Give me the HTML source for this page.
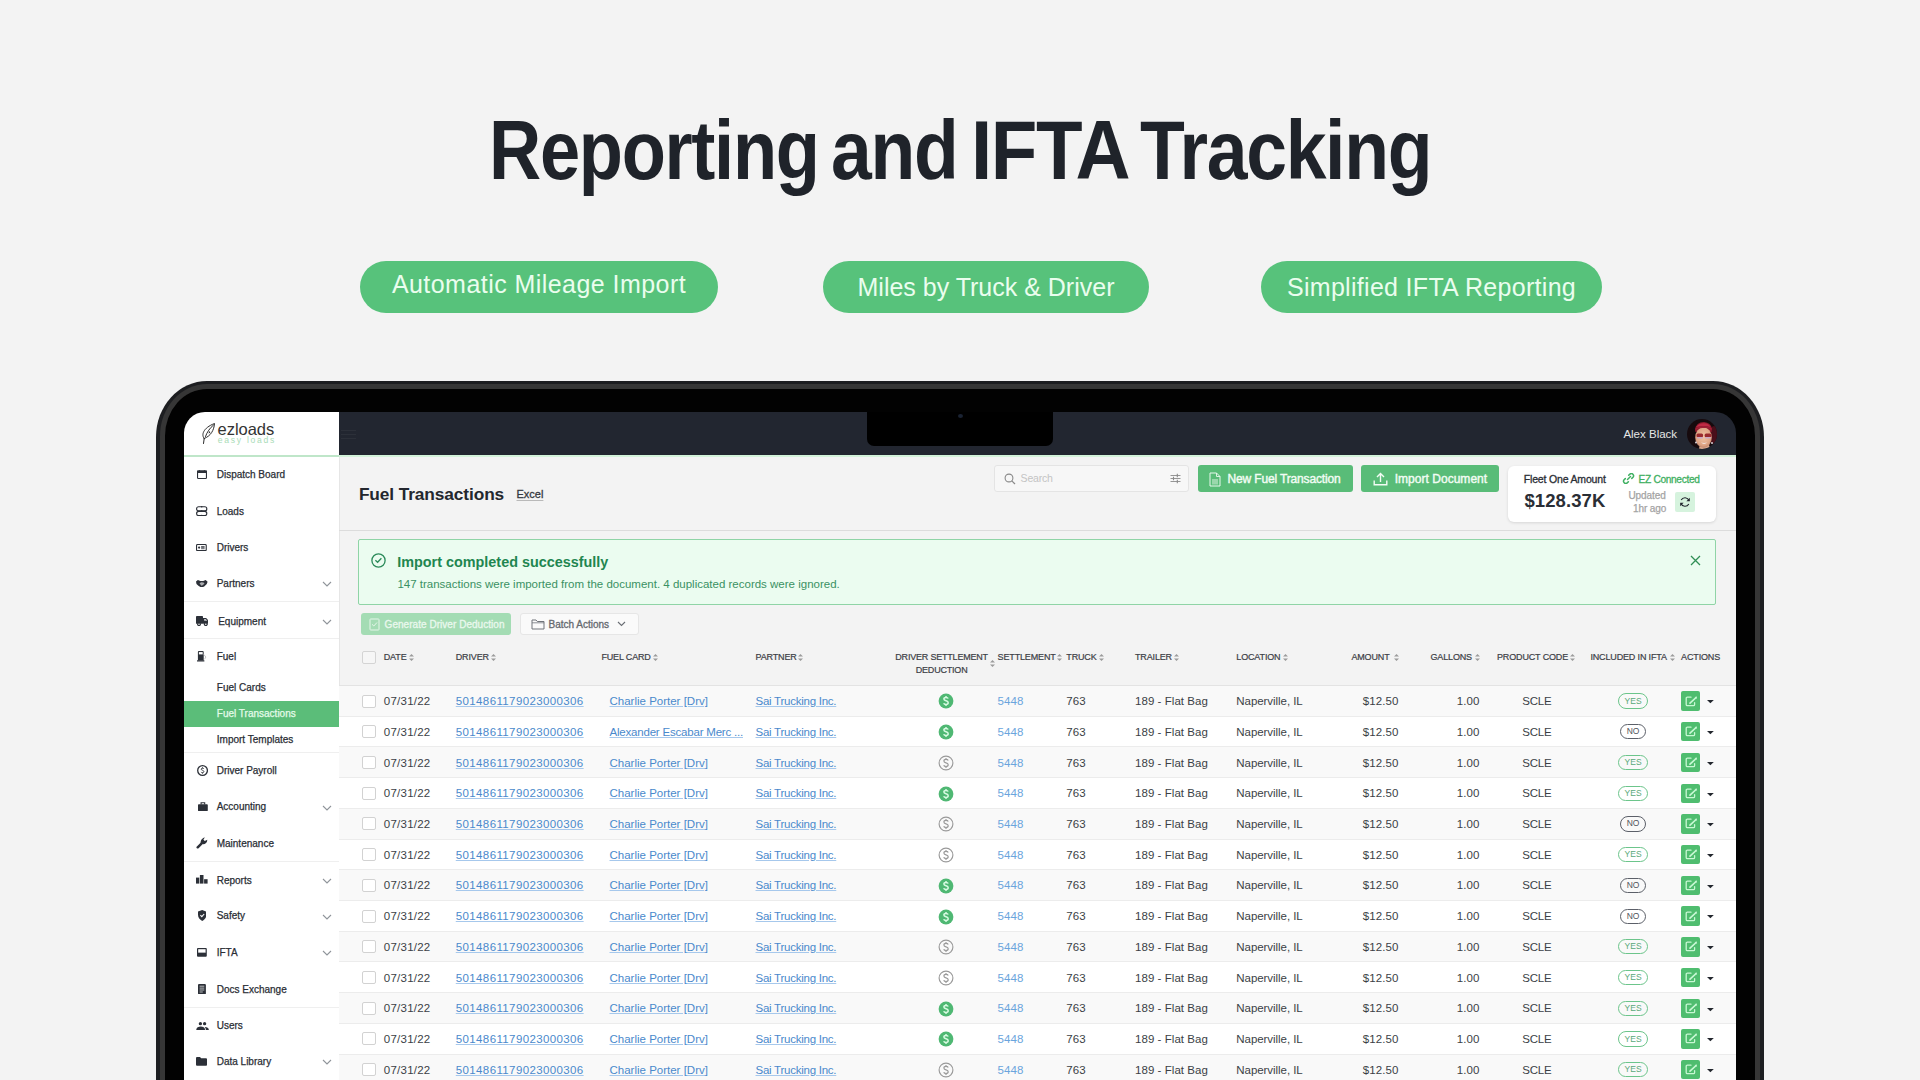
<!DOCTYPE html>
<html><head><meta charset="utf-8">
<style>
*{margin:0;padding:0;box-sizing:border-box}
html,body{width:1920px;height:1080px;overflow:hidden;background:#f3f3f3;font-family:"Liberation Sans",sans-serif}
#title div{position:absolute;top:96px;font-weight:bold;font-size:83px;color:#1f232a;letter-spacing:-1.5px;line-height:110px;white-space:nowrap;transform-origin:0 0}
.pill{position:absolute;top:261px;height:52px;border-radius:26px;background:#57c27b;color:#eafdee;font-size:25px;line-height:52px;text-align:center;white-space:nowrap}
#f1{position:absolute;left:156px;top:380.5px;width:1608px;height:900px;border-radius:51px/56px;background:#1d1e21}
#f2{position:absolute;left:159.7px;top:383.8px;width:1600.6px;height:900px;border-radius:47px/52px;background:#363636}
#f3{position:absolute;left:165px;top:389px;width:1590px;height:900px;border-radius:42px/47px;background:#020202}
#scr{position:absolute;left:184px;top:412px;width:1552px;height:800px;border-radius:21px 21px 0 0;overflow:hidden}
.t{position:absolute;white-space:nowrap}
.b{position:absolute}
.u{text-decoration:underline;text-underline-offset:1.5px;text-decoration-thickness:1px}
</style></head>
<body>
<div id="title"><div style="left:488.5px;transform:scaleX(.871)">Reporting</div><div style="left:831.15px;transform:scaleX(.883)">and</div><div style="left:971.2px;transform:scaleX(.919)">IFTA</div><div style="left:1140.2px;transform:scaleX(.884)">Tracking</div></div>
<div class="pill" style="left:360px;width:358px;line-height:47px;letter-spacing:.45px">Automatic Mileage Import</div>
<div class="pill" style="left:823px;width:326px">Miles by Truck &amp; Driver</div>
<div class="pill" style="left:1261px;width:341px;letter-spacing:.3px">Simplified IFTA Reporting</div>
<div id="f1"></div><div id="f2"></div><div id="f3"></div>
<div id="scr">

<div class="b" style="left:154.00px;top:43.00px;width:1398.00px;height:625.00px;background:#f3f3f3"></div>
<div class="b" style="left:0.00px;top:0.00px;width:154.50px;height:668.00px;background:#ffffff"></div>
<div class="b" style="left:154.50px;top:45.00px;width:1.00px;height:623.00px;background:#e6e6e6"></div>
<div class="b" style="left:155.00px;top:0.00px;width:1397.00px;height:43.00px;background:#222630"></div>
<div class="b" style="left:0.00px;top:43.20px;width:155.00px;height:1.60px;background:#bfe6c9"></div>
<div class="b" style="left:155.00px;top:43.20px;width:1397.00px;height:1.60px;background:#d3f2da"></div>
<div class="b" style="left:683.00px;top:0.00px;width:186.00px;height:34.00px;background:#000;border-radius:0 0 7px 7px"></div>
<div class="b" style="left:773.50px;top:1.50px;width:5.00px;height:4.00px;background:#1a2333;border-radius:50%"></div>
<div class="b" style="left:157.00px;top:17.50px;width:15.00px;height:1.00px;background:#2c3039"></div>
<div class="b" style="left:157.00px;top:21.50px;width:15.00px;height:1.00px;background:#2c3039"></div>
<div class="b" style="left:157.00px;top:25.50px;width:15.00px;height:1.00px;background:#2c3039"></div>
<div class="t" style="left:1439.40px;top:15.42px;font-size:11.5px;line-height:15px;color:#e6e6e6;">Alex Black</div>
<svg class="b" style="left:1503.20px;top:7.20px;" width="30" height="30" viewBox="0 0 30 30"><defs><clipPath id="av"><circle cx="15" cy="15" r="15"/></clipPath><radialGradient id="fg" cx="0.5" cy="0.45" r="0.6"><stop offset="0" stop-color="#f2c4a4"/><stop offset="0.7" stop-color="#dfa686"/><stop offset="1" stop-color="#b97a62"/></radialGradient></defs>
<g clip-path="url(#av)"><rect width="30" height="30" fill="#160a0d"/>
<ellipse cx="27" cy="16" rx="5" ry="9" fill="#4a0f1a"/>
<path d="M8 11 Q9 3 17 3 Q24 3.5 25 10 L24.5 13 L8.5 13Z" fill="#8d1a2c"/>
<path d="M9 8 Q12 4 17 4.2 Q22 4.5 23.5 8 Q18 6 9 8Z" fill="#c02a44"/>
<path d="M13 26 L22 26 L23.5 31 L11.5 31Z" fill="#d9ab90"/>
<ellipse cx="16.5" cy="18.5" rx="8.3" ry="10.3" fill="url(#fg)"/>
<path d="M8.5 11 Q12 8.5 17 9 Q22 8.6 24.5 11 L24.5 9 Q17 5.5 8.5 9Z" fill="#a01f36"/>
<rect x="9.5" y="14.6" width="6.6" height="3.6" rx="1.5" fill="#9a2a2e"/><rect x="17.6" y="14.6" width="6.8" height="3.6" rx="1.5" fill="#9a2a2e"/>
<rect x="10" y="18" width="6" height="1.6" rx="0.8" fill="#c9a9c4"/><rect x="18" y="18" width="6" height="1.6" rx="0.8" fill="#c9a9c4"/>
<path d="M14 23.6 Q17 26.2 20.2 23.6 Q17 24.4 14 23.6Z" fill="#f4e6e2"/>
<circle cx="9" cy="23.5" r="1" fill="#d8d0d4"/><circle cx="25" cy="24" r="1" fill="#d8d0d4"/>
</g></svg>
<svg class="b" style="left:16.00px;top:10.00px;" width="17" height="23" viewBox="0 0 17 23"><g fill="none" stroke="#2b2b2b" stroke-width="1" stroke-linecap="round">
<path d="M3.5 21.5 L4.2 16.5"/>
<path d="M4.2 16.5 C1 13 3 6 14.5 1.5 C14 8 11 14 4.2 16.5Z"/>
<path d="M5.5 14.5 C7 10 10 6 13.5 3"/>
</g><path d="M9.6 9 L8.3 11.4 L10.4 10.4Z" fill="#2b2b2b"/></svg>
<div class="t" style="left:33.60px;top:7.28px;font-size:16.5px;line-height:21px;color:#333333;letter-spacing:-0.05px;">ezloads</div>
<div class="t" style="left:33.80px;top:23.42px;font-size:8.6px;line-height:11px;color:#a9dcb7;letter-spacing:1.72px;">easy loads</div>
<div class="t" style="left:32.70px;top:56.34px;font-size:10px;line-height:13px;color:#2a2e35;-webkit-text-stroke:0.25px #2a2e35">Dispatch Board</div>
<svg class="b" style="left:12.90px;top:57.80px;" width="10" height="9" viewBox="0 0 10 9"><rect x="0.55" y="1" width="8.9" height="7.45" rx="0.8" fill="none" stroke="#2c3038" stroke-width="1.1"/><rect x="0" y="0.6" width="10" height="2.3" rx="0.5" fill="#2c3038"/><path d="M2.6 0 V1 M7.4 0 V1" stroke="#2c3038" stroke-width="0.8"/></svg>
<div class="t" style="left:32.70px;top:92.74px;font-size:10px;line-height:13px;color:#2a2e35;-webkit-text-stroke:0.25px #2a2e35">Loads</div>
<svg class="b" style="left:12.40px;top:93.90px;" width="11.4" height="10.4" viewBox="0 0 11.4 10.4"><rect x="0.6" y="0.8" width="10.2" height="4.1" rx="2" fill="none" stroke="#2c3038" stroke-width="1.15"/><rect x="0.6" y="5.4" width="10.2" height="4.2" rx="2.1" fill="none" stroke="#2c3038" stroke-width="1.15"/><circle cx="5.7" cy="0.8" r="0.8" fill="#2c3038"/><circle cx="5.7" cy="5.1" r="0.9" fill="#2c3038"/><circle cx="5.7" cy="9.6" r="0.8" fill="#2c3038"/></svg>
<div class="t" style="left:32.70px;top:128.83px;font-size:10px;line-height:13px;color:#2a2e35;-webkit-text-stroke:0.25px #2a2e35">Drivers</div>
<svg class="b" style="left:12.40px;top:131.90px;" width="10.8" height="7.2" viewBox="0 0 10.8 7.2"><rect x="0.55" y="0.55" width="9.7" height="6.1" rx="0.9" fill="none" stroke="#2c3038" stroke-width="1.1"/><circle cx="3.1" cy="3.6" r="1.1" fill="#2c3038"/><path d="M5.1 2.5 H8.6 M5.1 3.6 H8.6 M5.1 4.7 H8.6" stroke="#2c3038" stroke-width="0.75"/></svg>
<div class="t" style="left:32.70px;top:165.03px;font-size:10px;line-height:13px;color:#2a2e35;-webkit-text-stroke:0.25px #2a2e35">Partners</div>
<svg class="b" style="left:12.20px;top:167.70px;" width="11.6" height="7.3" viewBox="0 0 11.6 7.3"><path d="M0 1.6 L1.9 0 L4.4 1 L7.2 1 L9.7 0 L11.6 1.8 L10.8 4 L8.2 6.5 L6.3 7.3 L4.7 7.2 L2.4 5.7 L0.5 3.9Z" fill="#2c3038"/><path d="M3.5 3.3 L5.3 2.3 L7.5 2.4 L8.5 3.4 L6.7 5.3 L5.4 5.8Z" fill="#fff" opacity="0.6"/></svg>
<svg class="b" style="left:137.50px;top:169.20px;" width="10" height="6" viewBox="0 0 10 6"><path d="M1 1 L5 5 L9 1" fill="none" stroke="#8f949a" stroke-width="1.1"/></svg>
<div class="t" style="left:34.20px;top:202.53px;font-size:10px;line-height:13px;color:#2a2e35;-webkit-text-stroke:0.25px #2a2e35">Equipment</div>
<svg class="b" style="left:11.60px;top:204.10px;" width="12.8" height="10.2" viewBox="0 0 12.8 10.2"><rect x="0" y="0" width="7" height="7.8" rx="0.4" fill="#2c3038"/><path d="M7 1.9 H10.1 L12.8 4.9 V7.8 H7Z" fill="#2c3038"/><path d="M8.1 2.9 H9.7 L11.4 4.7 H8.1Z" fill="#fff" opacity="0.75"/><circle cx="3" cy="8.3" r="1.9" fill="#2c3038"/><circle cx="3" cy="8.3" r="0.75" fill="#fff"/><circle cx="9.8" cy="8.3" r="1.9" fill="#2c3038"/><circle cx="9.8" cy="8.3" r="0.75" fill="#fff"/></svg>
<svg class="b" style="left:137.50px;top:206.70px;" width="10" height="6" viewBox="0 0 10 6"><path d="M1 1 L5 5 L9 1" fill="none" stroke="#8f949a" stroke-width="1.1"/></svg>
<div class="t" style="left:32.70px;top:238.03px;font-size:10px;line-height:13px;color:#2a2e35;-webkit-text-stroke:0.25px #2a2e35">Fuel</div>
<svg class="b" style="left:13.20px;top:239.00px;" width="9.6" height="10.6" viewBox="0 0 9.6 10.6"><path d="M0.9 1 Q0.9 0 1.9 0 H5.7 Q6.7 0 6.7 1 V9.6 H0.9Z" fill="#2c3038"/><rect x="1.9" y="1.1" width="3.8" height="2.3" fill="#fff"/><rect x="0" y="9.2" width="7.4" height="1.4" rx="0.3" fill="#2c3038"/><path d="M6.7 3.4 L8.9 6 L7.6 8.2" fill="none" stroke="#b5b5b5" stroke-width="0.8"/></svg>
<div class="t" style="left:32.70px;top:352.24px;font-size:10px;line-height:13px;color:#2a2e35;-webkit-text-stroke:0.25px #2a2e35">Driver Payroll</div>
<svg class="b" style="left:12.50px;top:353.00px;" width="11.1" height="11" viewBox="0 0 11.1 11"><circle cx="5.55" cy="5.5" r="4.85" fill="none" stroke="#2c3038" stroke-width="1.3"/><path d="M6.9 4 C6.7 3.5 6.2 3.2 5.5 3.2 C4.7 3.2 4.2 3.6 4.2 4.2 C4.2 5.5 6.9 5.1 6.9 6.6 C6.9 7.3 6.3 7.7 5.5 7.7 C4.8 7.7 4.3 7.4 4.1 6.9 M5.5 2.3 V3.2 M5.5 7.7 V8.6" fill="none" stroke="#2c3038" stroke-width="0.9"/></svg>
<div class="t" style="left:32.70px;top:388.43px;font-size:10px;line-height:13px;color:#2a2e35;-webkit-text-stroke:0.25px #2a2e35">Accounting</div>
<svg class="b" style="left:14.10px;top:390.40px;" width="9.8" height="9.1" viewBox="0 0 9.8 9.1"><rect x="0" y="2.3" width="9.8" height="6.8" rx="0.8" fill="#2c3038"/><path d="M3.1 2.6 V0.8 H6.7 V2.6" fill="none" stroke="#2c3038" stroke-width="1.1"/></svg>
<svg class="b" style="left:137.50px;top:392.60px;" width="10" height="6" viewBox="0 0 10 6"><path d="M1 1 L5 5 L9 1" fill="none" stroke="#8f949a" stroke-width="1.1"/></svg>
<div class="t" style="left:32.70px;top:424.83px;font-size:10px;line-height:13px;color:#2a2e35;-webkit-text-stroke:0.25px #2a2e35">Maintenance</div>
<svg class="b" style="left:12.30px;top:425.20px;" width="11.8" height="12" viewBox="0 0 11.8 12"><path d="M1.7 10.3 L6.2 5.8" stroke="#2c3038" stroke-width="2.5" stroke-linecap="round"/><path d="M5 6.9 C4 4.6 5.3 1 8.9 0.5 L7.4 2.5 L8.7 4 L11.3 2.8 C11.4 6.1 8.5 7.7 6.3 7.1Z" fill="#2c3038"/></svg>
<div class="t" style="left:32.70px;top:461.63px;font-size:10px;line-height:13px;color:#2a2e35;-webkit-text-stroke:0.25px #2a2e35">Reports</div>
<svg class="b" style="left:12.10px;top:463.30px;" width="11.6" height="8.6" viewBox="0 0 11.6 8.6"><rect x="0" y="2.6" width="3.3" height="6" fill="#2c3038"/><rect x="3.9" y="0" width="3.6" height="8.6" fill="#2c3038"/><rect x="8.1" y="4.2" width="3.5" height="4.4" fill="#2c3038"/></svg>
<svg class="b" style="left:137.50px;top:465.80px;" width="10" height="6" viewBox="0 0 10 6"><path d="M1 1 L5 5 L9 1" fill="none" stroke="#8f949a" stroke-width="1.1"/></svg>
<div class="t" style="left:32.70px;top:497.43px;font-size:10px;line-height:13px;color:#2a2e35;-webkit-text-stroke:0.25px #2a2e35">Safety</div>
<svg class="b" style="left:13.60px;top:498.20px;" width="8.4" height="11" viewBox="0 0 8.4 11"><path d="M4.2 0 L8.4 1.6 V4.8 C8.4 7.6 6.6 9.8 4.2 11 C1.8 9.8 0 7.6 0 4.8 V1.6Z" fill="#2c3038"/><path d="M2.4 5.2 L3.8 6.6 L6.2 4" fill="none" stroke="#fff" stroke-width="1.1"/></svg>
<svg class="b" style="left:137.50px;top:501.60px;" width="10" height="6" viewBox="0 0 10 6"><path d="M1 1 L5 5 L9 1" fill="none" stroke="#8f949a" stroke-width="1.1"/></svg>
<div class="t" style="left:32.70px;top:534.13px;font-size:10px;line-height:13px;color:#2a2e35;-webkit-text-stroke:0.25px #2a2e35">IFTA</div>
<svg class="b" style="left:13.10px;top:536.00px;" width="9.8" height="8.7" viewBox="0 0 9.8 8.7"><rect x="0" y="0" width="9.8" height="8.7" rx="0.9" fill="#2c3038"/><rect x="1.2" y="1.2" width="7.4" height="3.3" fill="#fff"/><rect x="1.2" y="4.3" width="7.4" height="0.7" fill="#fff" opacity="0.4"/></svg>
<svg class="b" style="left:137.50px;top:538.30px;" width="10" height="6" viewBox="0 0 10 6"><path d="M1 1 L5 5 L9 1" fill="none" stroke="#8f949a" stroke-width="1.1"/></svg>
<div class="t" style="left:32.70px;top:570.63px;font-size:10px;line-height:13px;color:#2a2e35;-webkit-text-stroke:0.25px #2a2e35">Docs Exchange</div>
<svg class="b" style="left:14.00px;top:571.50px;" width="7.9" height="10.4" viewBox="0 0 7.9 10.4"><rect x="0" y="0" width="7.9" height="10.4" rx="1.1" fill="#2c3038"/><path d="M1.6 2.2 H6.3 M1.6 4.1 H6.3 M1.6 6 H6.3 M1.6 8 H4.8" stroke="#fff" stroke-width="0.85" opacity="0.8"/></svg>
<div class="t" style="left:32.70px;top:607.03px;font-size:10px;line-height:13px;color:#2a2e35;-webkit-text-stroke:0.25px #2a2e35">Users</div>
<svg class="b" style="left:11.80px;top:609.60px;" width="12.9" height="8" viewBox="0 0 12.9 8"><circle cx="4.4" cy="1.7" r="1.65" fill="#2c3038"/><circle cx="8.6" cy="1.7" r="1.65" fill="#2c3038"/><path d="M0.2 8 C0.4 5.3 2.5 4.5 4.8 4.5 C7 4.5 8.9 5.3 9.2 8Z" fill="#2c3038"/><path d="M9.9 8 C9.8 6.7 9.4 5.8 8.8 5.1 C11 5 12.6 5.9 12.9 8Z" fill="#2c3038"/></svg>
<div class="t" style="left:32.70px;top:643.24px;font-size:10px;line-height:13px;color:#2a2e35;-webkit-text-stroke:0.25px #2a2e35">Data Library</div>
<svg class="b" style="left:12.40px;top:644.90px;" width="11.1" height="8.7" viewBox="0 0 11.1 8.7"><path d="M0 1 Q0 0 1 0 H4 L5.2 1.2 H10.1 Q11.1 1.2 11.1 2.2 V7.7 Q11.1 8.7 10.1 8.7 H1 Q0 8.7 0 7.7Z" fill="#2c3038"/></svg>
<svg class="b" style="left:137.50px;top:647.40px;" width="10" height="6" viewBox="0 0 10 6"><path d="M1 1 L5 5 L9 1" fill="none" stroke="#8f949a" stroke-width="1.1"/></svg>
<div class="t" style="left:32.80px;top:269.24px;font-size:10px;line-height:13px;color:#2a2e35;-webkit-text-stroke:0.25px #2a2e35">Fuel Cards</div>
<div class="b" style="left:0.00px;top:288.80px;width:154.50px;height:25.90px;background:#5bbd79"></div>
<div class="t" style="left:32.80px;top:295.24px;font-size:10px;line-height:13px;color:#e4fbe9;-webkit-text-stroke:0.25px #e4fbe9">Fuel Transactions</div>
<div class="t" style="left:32.80px;top:321.03px;font-size:10px;line-height:13px;color:#2a2e35;-webkit-text-stroke:0.25px #2a2e35">Import Templates</div>
<div class="b" style="left:0.00px;top:188.80px;width:154.50px;height:1.00px;background:#efefef"></div>
<div class="b" style="left:0.00px;top:226.30px;width:154.50px;height:1.00px;background:#efefef"></div>
<div class="b" style="left:0.00px;top:340.20px;width:154.50px;height:1.00px;background:#efefef"></div>
<div class="b" style="left:0.00px;top:449.30px;width:154.50px;height:1.00px;background:#efefef"></div>
<div class="b" style="left:0.00px;top:594.50px;width:154.50px;height:1.00px;background:#efefef"></div>
<div class="t" style="left:174.90px;top:70.61px;font-size:17.3px;line-height:22px;color:#23272e;font-weight:700;letter-spacing:-0.1px;">Fuel Transactions</div>
<div class="t" style="left:332.50px;top:74.69px;font-size:11px;line-height:14px;color:#35393f;letter-spacing:0px;-webkit-text-stroke:0.3px #35393f;text-decoration:underline;text-decoration-color:#b9b9b9;text-underline-offset:1.5px">Excel</div>
<div class="b" style="left:810.20px;top:53.00px;width:195.20px;height:26.70px;background:#f7f7f7;border:1px solid #e4e4e4;border-radius:3px"></div>
<svg class="b" style="left:819.50px;top:60.50px;" width="12" height="12" viewBox="0 0 12 12"><circle cx="5" cy="5" r="3.9" fill="none" stroke="#8a8a8a" stroke-width="1.1"/><path d="M7.8 7.8 L11 11" stroke="#8a8a8a" stroke-width="1.2"/></svg>
<div class="t" style="left:836.60px;top:59.26px;font-size:10.5px;line-height:14px;color:#c4c4c4;letter-spacing:-0.2px;">Search</div>
<svg class="b" style="left:985.50px;top:61.00px;" width="11" height="11" viewBox="0 0 11 11"><path d="M0.5 2.5 H10.5 M0.5 5.5 H10.5 M0.5 8.5 H10.5" stroke="#8a8a8a" stroke-width="0.9"/><path d="M7.3 0.8 V4.2 M3.5 3.8 V7.2 M7.3 6.8 V10.2" stroke="#8a8a8a" stroke-width="1.1"/></svg>
<div class="b" style="left:1014.00px;top:53.00px;width:154.50px;height:26.70px;background:#59bc78;border-radius:3px"></div>
<svg class="b" style="left:1024.50px;top:59.50px;" width="12" height="15" viewBox="0 0 12 15"><path d="M1 1 H7.5 L11 4.5 V14 H1Z" fill="none" stroke="#e9f8ed" stroke-width="1"/><path d="M7.5 1 V4.5 H11" fill="none" stroke="#e9f8ed" stroke-width="0.9"/><rect x="3" y="7" width="6" height="5.5" fill="#9ad7ac"/></svg>
<div class="t" style="left:1043.50px;top:58.64px;font-size:12px;line-height:16px;color:#f2fcf4;letter-spacing:-0.15px;-webkit-text-stroke:0.4px #f2fcf4">New Fuel Transaction</div>
<div class="b" style="left:1176.80px;top:53.00px;width:138.00px;height:26.70px;background:#59bc78;border-radius:3px"></div>
<svg class="b" style="left:1188.50px;top:59.50px;" width="15" height="15" viewBox="0 0 15 15"><path d="M1.2 8.5 V12.8 H13.8 V8.5" fill="none" stroke="#f2fcf4" stroke-width="1.4"/><path d="M7.5 10 V1.8 M4 5 L7.5 1.6 L11 5" fill="none" stroke="#f2fcf4" stroke-width="1.4"/></svg>
<div class="t" style="left:1210.70px;top:58.64px;font-size:12px;line-height:16px;color:#f2fcf4;letter-spacing:0.03px;-webkit-text-stroke:0.4px #f2fcf4">Import Document</div>
<div class="b" style="left:1323.50px;top:53.60px;width:208.40px;height:56.40px;background:#fff;border-radius:6px;box-shadow:0 1px 3px rgba(0,0,0,.12)"></div>
<div class="t" style="left:1339.80px;top:60.16px;font-size:10.5px;line-height:14px;color:#2a2e35;letter-spacing:-0.17px;-webkit-text-stroke:0.3px #2a2e35">Fleet One Amount</div>
<div class="t" style="left:1340.40px;top:76.99px;font-size:18.5px;line-height:24px;color:#2a2e35;font-weight:700;letter-spacing:0.1px;">$128.37K</div>
<svg class="b" style="left:1437.50px;top:61.00px;" width="13" height="11" viewBox="0 0 13 11"><g fill="none" stroke="#3fb062" stroke-width="1.5" stroke-linecap="round"><path d="M5.5 6.5 L8.5 3.5"/><path d="M6.7 2.3 L7.9 1.1 A2.2 2.2 0 0 1 11 4.2 L9.8 5.4"/><path d="M3.3 5.6 L2.1 6.8 A2.2 2.2 0 0 0 5.2 9.9 L6.4 8.7"/></g></svg>
<div class="t" style="left:1454.60px;top:60.77px;font-size:10.2px;line-height:13px;color:#3fb062;letter-spacing:-0.35px;-webkit-text-stroke:0.3px #3fb062">EZ Connected</div>
<div class="t" style="left:1444.50px;top:76.74px;font-size:10px;line-height:13px;color:#a3a3a3;letter-spacing:-0.1px;-webkit-text-stroke:0.25px #a3a3a3">Updated</div>
<div class="t" style="left:1449.00px;top:90.04px;font-size:10px;line-height:13px;color:#a3a3a3;letter-spacing:-0.1px;-webkit-text-stroke:0.25px #a3a3a3">1hr ago</div>
<div class="b" style="left:1491.20px;top:80.00px;width:19.90px;height:20.00px;background:#d6f3de;border-radius:2px"></div>
<svg class="b" style="left:1495.00px;top:84.00px;" width="12" height="12" viewBox="0 0 12 12"><g fill="none" stroke="#22262e" stroke-width="1.1"><path d="M10 4.5 A4.3 4.3 0 0 0 2.2 4"/><path d="M2 7.5 A4.3 4.3 0 0 0 9.8 8"/></g><path d="M10.8 1.8 V5.2 H7.4Z" fill="#22262e"/><path d="M1.2 10.2 V6.8 H4.6Z" fill="#22262e"/></svg>
<div class="b" style="left:155.00px;top:118.00px;width:1397.00px;height:1.00px;background:#dcdcdc"></div>
<div class="b" style="left:174.40px;top:127.30px;width:1357.80px;height:65.60px;background:#ebfcf0;border:1px solid #8fd4a6;border-radius:2px"></div>
<svg class="b" style="left:187.30px;top:140.50px;" width="15" height="15" viewBox="0 0 15 15"><circle cx="7.5" cy="7.5" r="6.6" fill="none" stroke="#2a8a59" stroke-width="1.3"/><path d="M4.4 7.3 L6.6 9.3 L10.4 5.3" fill="none" stroke="#2a8a59" stroke-width="1.3"/></svg>
<div class="t" style="left:213.20px;top:140.61px;font-size:14.4px;line-height:19px;color:#1f8650;font-weight:700;">Import completed successfully</div>
<div class="t" style="left:213.40px;top:164.92px;font-size:11.5px;line-height:15px;color:#3a9163;">147 transactions were imported from the document. 4 duplicated records were ignored.</div>
<svg class="b" style="left:1505.50px;top:142.50px;" width="11" height="11" viewBox="0 0 11 11"><path d="M1 1 L10 10 M10 1 L1 10" stroke="#2f8f55" stroke-width="1.3"/></svg>
<div class="b" style="left:177.00px;top:201.00px;width:150.40px;height:21.60px;background:#a4dcb4;border-radius:3px"></div>
<svg class="b" style="left:184.50px;top:205.50px;" width="11" height="13" viewBox="0 0 11 13"><rect x="1" y="1" width="9" height="11" rx="0.6" fill="none" stroke="#e6f6ea" stroke-width="1"/><path d="M3 6.3 L4.8 8 L8 4.5" fill="none" stroke="#e6f6ea" stroke-width="1"/></svg>
<div class="t" style="left:200.60px;top:205.83px;font-size:10px;line-height:13px;color:#eaf8ee;letter-spacing:0.04px;-webkit-text-stroke:0.3px #eaf8ee">Generate Driver Deduction</div>
<div class="b" style="left:336.20px;top:201.00px;width:118.60px;height:21.80px;background:#fafafa;border:1px solid #e6e6e6;border-radius:3px"></div>
<svg class="b" style="left:346.50px;top:205.50px;" width="14" height="12" viewBox="0 0 14 12"><path d="M1 2 H5 L6.3 3.5 H13 V11 H1Z" fill="none" stroke="#70747a" stroke-width="1"/><path d="M1 4.8 H13" stroke="#70747a" stroke-width="0.8"/></svg>
<div class="t" style="left:364.50px;top:205.83px;font-size:10px;line-height:13px;color:#65696f;-webkit-text-stroke:0.3px #65696f">Batch Actions</div>
<svg class="b" style="left:432.50px;top:208.50px;" width="9" height="6" viewBox="0 0 9 6"><path d="M1 1 L4.5 4.5 L8 1" fill="none" stroke="#6a6e74" stroke-width="1.1"/></svg>
<div class="b" style="left:178.20px;top:238.80px;width:13.60px;height:13.20px;background:#f6f6f6;border:1px solid #d4d4d4;border-radius:2px"></div>
<div class="t" style="left:199.75px;top:239.48px;font-size:9px;line-height:12px;color:#3c4046;letter-spacing:-0.15px;-webkit-text-stroke:0.2px #3c4046">DATE</div>
<svg class="b" style="left:225.40px;top:242.10px;" width="5" height="8" viewBox="0 0 5 8"><path d="M0 2.4 L2.5 0 L5 2.4Z M0 4.6 L5 4.6 L2.5 7Z" fill="#9b9b9b"/></svg>
<div class="t" style="left:271.75px;top:239.48px;font-size:9px;line-height:12px;color:#3c4046;letter-spacing:-0.15px;-webkit-text-stroke:0.2px #3c4046">DRIVER</div>
<svg class="b" style="left:306.50px;top:242.10px;" width="5" height="8" viewBox="0 0 5 8"><path d="M0 2.4 L2.5 0 L5 2.4Z M0 4.6 L5 4.6 L2.5 7Z" fill="#9b9b9b"/></svg>
<div class="t" style="left:417.40px;top:239.48px;font-size:9px;line-height:12px;color:#3c4046;letter-spacing:-0.15px;-webkit-text-stroke:0.2px #3c4046">FUEL CARD</div>
<svg class="b" style="left:468.50px;top:242.10px;" width="5" height="8" viewBox="0 0 5 8"><path d="M0 2.4 L2.5 0 L5 2.4Z M0 4.6 L5 4.6 L2.5 7Z" fill="#9b9b9b"/></svg>
<div class="t" style="left:571.50px;top:239.48px;font-size:9px;line-height:12px;color:#3c4046;letter-spacing:-0.15px;-webkit-text-stroke:0.2px #3c4046">PARTNER</div>
<svg class="b" style="left:613.50px;top:242.10px;" width="5" height="8" viewBox="0 0 5 8"><path d="M0 2.4 L2.5 0 L5 2.4Z M0 4.6 L5 4.6 L2.5 7Z" fill="#9b9b9b"/></svg>
<div class="t" style="left:813.60px;top:239.48px;font-size:9px;line-height:12px;color:#3c4046;letter-spacing:-0.15px;-webkit-text-stroke:0.2px #3c4046">SETTLEMENT</div>
<svg class="b" style="left:872.50px;top:242.10px;" width="5" height="8" viewBox="0 0 5 8"><path d="M0 2.4 L2.5 0 L5 2.4Z M0 4.6 L5 4.6 L2.5 7Z" fill="#9b9b9b"/></svg>
<div class="t" style="left:882.30px;top:239.48px;font-size:9px;line-height:12px;color:#3c4046;letter-spacing:-0.15px;-webkit-text-stroke:0.2px #3c4046">TRUCK</div>
<svg class="b" style="left:914.50px;top:242.10px;" width="5" height="8" viewBox="0 0 5 8"><path d="M0 2.4 L2.5 0 L5 2.4Z M0 4.6 L5 4.6 L2.5 7Z" fill="#9b9b9b"/></svg>
<div class="t" style="left:951.00px;top:239.48px;font-size:9px;line-height:12px;color:#3c4046;letter-spacing:-0.15px;-webkit-text-stroke:0.2px #3c4046">TRAILER</div>
<svg class="b" style="left:990.00px;top:242.10px;" width="5" height="8" viewBox="0 0 5 8"><path d="M0 2.4 L2.5 0 L5 2.4Z M0 4.6 L5 4.6 L2.5 7Z" fill="#9b9b9b"/></svg>
<div class="t" style="left:1052.30px;top:239.48px;font-size:9px;line-height:12px;color:#3c4046;letter-spacing:-0.15px;-webkit-text-stroke:0.2px #3c4046">LOCATION</div>
<svg class="b" style="left:1099.00px;top:242.10px;" width="5" height="8" viewBox="0 0 5 8"><path d="M0 2.4 L2.5 0 L5 2.4Z M0 4.6 L5 4.6 L2.5 7Z" fill="#9b9b9b"/></svg>
<div class="t" style="left:1167.40px;top:239.48px;font-size:9px;line-height:12px;color:#3c4046;letter-spacing:-0.15px;-webkit-text-stroke:0.2px #3c4046">AMOUNT</div>
<svg class="b" style="left:1210.00px;top:242.10px;" width="5" height="8" viewBox="0 0 5 8"><path d="M0 2.4 L2.5 0 L5 2.4Z M0 4.6 L5 4.6 L2.5 7Z" fill="#9b9b9b"/></svg>
<div class="t" style="left:1246.50px;top:239.48px;font-size:9px;line-height:12px;color:#3c4046;letter-spacing:-0.15px;-webkit-text-stroke:0.2px #3c4046">GALLONS</div>
<svg class="b" style="left:1290.50px;top:242.10px;" width="5" height="8" viewBox="0 0 5 8"><path d="M0 2.4 L2.5 0 L5 2.4Z M0 4.6 L5 4.6 L2.5 7Z" fill="#9b9b9b"/></svg>
<div class="t" style="left:1313.00px;top:239.48px;font-size:9px;line-height:12px;color:#3c4046;letter-spacing:-0.15px;-webkit-text-stroke:0.2px #3c4046">PRODUCT CODE</div>
<svg class="b" style="left:1385.50px;top:242.10px;" width="5" height="8" viewBox="0 0 5 8"><path d="M0 2.4 L2.5 0 L5 2.4Z M0 4.6 L5 4.6 L2.5 7Z" fill="#9b9b9b"/></svg>
<div class="t" style="left:1406.40px;top:239.48px;font-size:9px;line-height:12px;color:#3c4046;letter-spacing:-0.15px;-webkit-text-stroke:0.2px #3c4046">INCLUDED IN IFTA</div>
<svg class="b" style="left:1486.00px;top:242.10px;" width="5" height="8" viewBox="0 0 5 8"><path d="M0 2.4 L2.5 0 L5 2.4Z M0 4.6 L5 4.6 L2.5 7Z" fill="#9b9b9b"/></svg>
<div class="t" style="left:1497.10px;top:239.48px;font-size:9px;line-height:12px;color:#3c4046;letter-spacing:-0.15px;-webkit-text-stroke:0.2px #3c4046">ACTIONS</div>
<div class="t" style="left:697.60px;top:239.48px;width:120px;text-align:center;font-size:9px;line-height:12px;color:#3c4046;letter-spacing:-0.2px;-webkit-text-stroke:0.2px #3c4046">DRIVER SETTLEMENT</div>
<div class="t" style="left:697.60px;top:251.68px;width:120px;text-align:center;font-size:9px;line-height:12px;color:#3c4046;letter-spacing:-0.2px;-webkit-text-stroke:0.2px #3c4046">DEDUCTION</div>
<svg class="b" style="left:806.00px;top:248.00px;" width="5" height="8" viewBox="0 0 5 8"><path d="M0 2.4 L2.5 0 L5 2.4Z M0 4.6 L5 4.6 L2.5 7Z" fill="#9b9b9b"/></svg>
<div class="b" style="left:155.00px;top:272.50px;width:1397.00px;height:1.50px;background:#e3e3e3"></div>
<div class="b" style="left:155.00px;top:274.00px;width:1397.00px;height:30.72px;background:#f9f9f9"></div>
<div class="b" style="left:155.00px;top:303.72px;width:1397.00px;height:1.00px;background:#ececec"></div>
<div class="b" style="left:178.20px;top:282.56px;width:13.60px;height:13.00px;background:#fff;border:1px solid #d2d2d2;border-radius:2px"></div>
<div class="t" style="left:199.75px;top:282.08px;font-size:11.5px;line-height:15px;color:#3b3f46;letter-spacing:0.25px;">07/31/22</div>
<div class="t" style="left:271.75px;top:282.08px;font-size:11.5px;line-height:15px;color:#4a89cc;letter-spacing:0.38px;text-decoration:underline;text-underline-offset:0.5px;text-decoration-color:#a6c8ec">5014861179023000306</div>
<div class="t" style="left:425.50px;top:282.08px;font-size:11.5px;line-height:15px;color:#4a89cc;letter-spacing:0.0px;text-decoration:underline;text-underline-offset:0.5px;text-decoration-color:#a6c8ec">Charlie Porter [Drv]</div>
<div class="t" style="left:571.50px;top:282.08px;font-size:11.5px;line-height:15px;color:#4a89cc;letter-spacing:-0.25px;text-decoration:underline;text-underline-offset:0.5px;text-decoration-color:#a6c8ec">Sai Trucking Inc.</div>
<svg class="b" style="left:753.80px;top:281.46px;" width="16" height="16" viewBox="0 0 16 16"><circle cx="8" cy="8" r="7.4" fill="#4fb873"/><path d="M10.2 5.5 C9.9 4.8 9.1 4.4 8 4.4 C6.7 4.4 5.9 5.1 5.9 6 C5.9 7.1 6.9 7.5 8 7.8 C9.2 8.1 10.2 8.6 10.2 9.8 C10.2 10.8 9.2 11.5 8 11.5 C6.8 11.5 6 11.1 5.7 10.3 M8 3.1 V4.4 M8 11.5 V12.9" fill="none" stroke="#d9fbe3" stroke-width="1.5"/></svg>
<div class="t" style="left:813.60px;top:282.08px;font-size:11.5px;line-height:15px;color:#6aa5dd;letter-spacing:0.1px;">5448</div>
<div class="t" style="left:882.30px;top:282.08px;font-size:11.5px;line-height:15px;color:#3b3f46;letter-spacing:0.1px;">763</div>
<div class="t" style="left:951.00px;top:282.08px;font-size:11.5px;line-height:15px;color:#3b3f46;letter-spacing:0.05px;">189 - Flat Bag</div>
<div class="t" style="left:1052.30px;top:282.08px;font-size:11.5px;line-height:15px;color:#3b3f46;letter-spacing:-0.05px;">Naperville, IL</div>
<div class="t" style="left:1114.50px;top:282.08px;width:100px;text-align:right;font-size:11.5px;line-height:15px;color:#3b3f46;letter-spacing:0.1px;">$12.50</div>
<div class="t" style="left:1195.50px;top:282.08px;width:100px;text-align:right;font-size:11.5px;line-height:15px;color:#3b3f46;letter-spacing:0.1px;">1.00</div>
<div class="t" style="left:1338.30px;top:282.08px;font-size:11.5px;line-height:15px;color:#3b3f46;letter-spacing:-0.2px;">SCLE</div>
<div class="b" style="left:1434.00px;top:281.46px;width:30.20px;height:15.20px;border:1.25px solid #6cc58b;border-radius:8px"></div>
<div class="t" style="left:1429.10px;top:283.61px;width:40px;text-align:center;font-size:8.5px;line-height:11px;color:#5aa878;">YES</div>
<div class="b" style="left:1496.70px;top:279.36px;width:19.40px;height:19.40px;background:#4fbd6f;border-radius:2px"></div>
<svg class="b" style="left:1501.00px;top:283.56px;" width="13" height="11" viewBox="0 0 13 11"><path d="M6 1.2 H2.4 Q1.2 1.2 1.2 2.4 V8.4 Q1.2 9.6 2.4 9.6 H8.4 Q9.6 9.6 9.6 8.4 V6.6" fill="none" stroke="#c8f8d4" stroke-width="1.3" stroke-linecap="round"/><path d="M5 7.2 L10.6 2" fill="none" stroke="#c8f8d4" stroke-width="1.7" stroke-linecap="round"/><path d="M9.6 0.9 L12 0.6 L11.6 3Z" fill="#c8f8d4"/></svg>
<svg class="b" style="left:1523.30px;top:288.36px;" width="7" height="4" viewBox="0 0 7 4"><path d="M0 0 H6.8 L3.4 3.2Z" fill="#23272e"/></svg>
<div class="b" style="left:155.00px;top:304.72px;width:1397.00px;height:30.72px;background:#ffffff"></div>
<div class="b" style="left:155.00px;top:334.44px;width:1397.00px;height:1.00px;background:#ececec"></div>
<div class="b" style="left:178.20px;top:313.28px;width:13.60px;height:13.00px;background:#fff;border:1px solid #d2d2d2;border-radius:2px"></div>
<div class="t" style="left:199.75px;top:312.80px;font-size:11.5px;line-height:15px;color:#3b3f46;letter-spacing:0.25px;">07/31/22</div>
<div class="t" style="left:271.75px;top:312.80px;font-size:11.5px;line-height:15px;color:#4a89cc;letter-spacing:0.38px;text-decoration:underline;text-underline-offset:0.5px;text-decoration-color:#a6c8ec">5014861179023000306</div>
<div class="t" style="left:425.50px;top:312.80px;font-size:11.5px;line-height:15px;color:#4a89cc;letter-spacing:-0.2px;text-decoration:underline;text-underline-offset:0.5px;text-decoration-color:#a6c8ec">Alexander Escabar Merc ...</div>
<div class="t" style="left:571.50px;top:312.80px;font-size:11.5px;line-height:15px;color:#4a89cc;letter-spacing:-0.25px;text-decoration:underline;text-underline-offset:0.5px;text-decoration-color:#a6c8ec">Sai Trucking Inc.</div>
<svg class="b" style="left:753.80px;top:312.18px;" width="16" height="16" viewBox="0 0 16 16"><circle cx="8" cy="8" r="7.4" fill="#4fb873"/><path d="M10.2 5.5 C9.9 4.8 9.1 4.4 8 4.4 C6.7 4.4 5.9 5.1 5.9 6 C5.9 7.1 6.9 7.5 8 7.8 C9.2 8.1 10.2 8.6 10.2 9.8 C10.2 10.8 9.2 11.5 8 11.5 C6.8 11.5 6 11.1 5.7 10.3 M8 3.1 V4.4 M8 11.5 V12.9" fill="none" stroke="#d9fbe3" stroke-width="1.5"/></svg>
<div class="t" style="left:813.60px;top:312.80px;font-size:11.5px;line-height:15px;color:#6aa5dd;letter-spacing:0.1px;">5448</div>
<div class="t" style="left:882.30px;top:312.80px;font-size:11.5px;line-height:15px;color:#3b3f46;letter-spacing:0.1px;">763</div>
<div class="t" style="left:951.00px;top:312.80px;font-size:11.5px;line-height:15px;color:#3b3f46;letter-spacing:0.05px;">189 - Flat Bag</div>
<div class="t" style="left:1052.30px;top:312.80px;font-size:11.5px;line-height:15px;color:#3b3f46;letter-spacing:-0.05px;">Naperville, IL</div>
<div class="t" style="left:1114.50px;top:312.80px;width:100px;text-align:right;font-size:11.5px;line-height:15px;color:#3b3f46;letter-spacing:0.1px;">$12.50</div>
<div class="t" style="left:1195.50px;top:312.80px;width:100px;text-align:right;font-size:11.5px;line-height:15px;color:#3b3f46;letter-spacing:0.1px;">1.00</div>
<div class="t" style="left:1338.30px;top:312.80px;font-size:11.5px;line-height:15px;color:#3b3f46;letter-spacing:-0.2px;">SCLE</div>
<div class="b" style="left:1435.70px;top:312.18px;width:26.70px;height:15.20px;border:1.3px solid #5c6069;border-radius:8px"></div>
<div class="t" style="left:1429.05px;top:314.33px;width:40px;text-align:center;font-size:8.5px;line-height:11px;color:#50545b;">NO</div>
<div class="b" style="left:1496.70px;top:310.08px;width:19.40px;height:19.40px;background:#4fbd6f;border-radius:2px"></div>
<svg class="b" style="left:1501.00px;top:314.28px;" width="13" height="11" viewBox="0 0 13 11"><path d="M6 1.2 H2.4 Q1.2 1.2 1.2 2.4 V8.4 Q1.2 9.6 2.4 9.6 H8.4 Q9.6 9.6 9.6 8.4 V6.6" fill="none" stroke="#c8f8d4" stroke-width="1.3" stroke-linecap="round"/><path d="M5 7.2 L10.6 2" fill="none" stroke="#c8f8d4" stroke-width="1.7" stroke-linecap="round"/><path d="M9.6 0.9 L12 0.6 L11.6 3Z" fill="#c8f8d4"/></svg>
<svg class="b" style="left:1523.30px;top:319.08px;" width="7" height="4" viewBox="0 0 7 4"><path d="M0 0 H6.8 L3.4 3.2Z" fill="#23272e"/></svg>
<div class="b" style="left:155.00px;top:335.44px;width:1397.00px;height:30.72px;background:#f9f9f9"></div>
<div class="b" style="left:155.00px;top:365.16px;width:1397.00px;height:1.00px;background:#ececec"></div>
<div class="b" style="left:178.20px;top:344.00px;width:13.60px;height:13.00px;background:#fff;border:1px solid #d2d2d2;border-radius:2px"></div>
<div class="t" style="left:199.75px;top:343.52px;font-size:11.5px;line-height:15px;color:#3b3f46;letter-spacing:0.25px;">07/31/22</div>
<div class="t" style="left:271.75px;top:343.52px;font-size:11.5px;line-height:15px;color:#4a89cc;letter-spacing:0.38px;text-decoration:underline;text-underline-offset:0.5px;text-decoration-color:#a6c8ec">5014861179023000306</div>
<div class="t" style="left:425.50px;top:343.52px;font-size:11.5px;line-height:15px;color:#4a89cc;letter-spacing:0.0px;text-decoration:underline;text-underline-offset:0.5px;text-decoration-color:#a6c8ec">Charlie Porter [Drv]</div>
<div class="t" style="left:571.50px;top:343.52px;font-size:11.5px;line-height:15px;color:#4a89cc;letter-spacing:-0.25px;text-decoration:underline;text-underline-offset:0.5px;text-decoration-color:#a6c8ec">Sai Trucking Inc.</div>
<svg class="b" style="left:753.80px;top:342.90px;" width="16" height="16" viewBox="0 0 16 16"><circle cx="8" cy="8" r="6.9" fill="none" stroke="#9a9a9a" stroke-width="1.15"/><path d="M10.2 5.5 C9.9 4.8 9.1 4.4 8 4.4 C6.7 4.4 5.9 5.1 5.9 6 C5.9 7.1 6.9 7.5 8 7.8 C9.2 8.1 10.2 8.6 10.2 9.8 C10.2 10.8 9.2 11.5 8 11.5 C6.8 11.5 6 11.1 5.7 10.3 M8 3.1 V4.4 M8 11.5 V12.9" fill="none" stroke="#9a9a9a" stroke-width="1.2"/></svg>
<div class="t" style="left:813.60px;top:343.52px;font-size:11.5px;line-height:15px;color:#6aa5dd;letter-spacing:0.1px;">5448</div>
<div class="t" style="left:882.30px;top:343.52px;font-size:11.5px;line-height:15px;color:#3b3f46;letter-spacing:0.1px;">763</div>
<div class="t" style="left:951.00px;top:343.52px;font-size:11.5px;line-height:15px;color:#3b3f46;letter-spacing:0.05px;">189 - Flat Bag</div>
<div class="t" style="left:1052.30px;top:343.52px;font-size:11.5px;line-height:15px;color:#3b3f46;letter-spacing:-0.05px;">Naperville, IL</div>
<div class="t" style="left:1114.50px;top:343.52px;width:100px;text-align:right;font-size:11.5px;line-height:15px;color:#3b3f46;letter-spacing:0.1px;">$12.50</div>
<div class="t" style="left:1195.50px;top:343.52px;width:100px;text-align:right;font-size:11.5px;line-height:15px;color:#3b3f46;letter-spacing:0.1px;">1.00</div>
<div class="t" style="left:1338.30px;top:343.52px;font-size:11.5px;line-height:15px;color:#3b3f46;letter-spacing:-0.2px;">SCLE</div>
<div class="b" style="left:1434.00px;top:342.90px;width:30.20px;height:15.20px;border:1.25px solid #6cc58b;border-radius:8px"></div>
<div class="t" style="left:1429.10px;top:345.05px;width:40px;text-align:center;font-size:8.5px;line-height:11px;color:#5aa878;">YES</div>
<div class="b" style="left:1496.70px;top:340.80px;width:19.40px;height:19.40px;background:#4fbd6f;border-radius:2px"></div>
<svg class="b" style="left:1501.00px;top:345.00px;" width="13" height="11" viewBox="0 0 13 11"><path d="M6 1.2 H2.4 Q1.2 1.2 1.2 2.4 V8.4 Q1.2 9.6 2.4 9.6 H8.4 Q9.6 9.6 9.6 8.4 V6.6" fill="none" stroke="#c8f8d4" stroke-width="1.3" stroke-linecap="round"/><path d="M5 7.2 L10.6 2" fill="none" stroke="#c8f8d4" stroke-width="1.7" stroke-linecap="round"/><path d="M9.6 0.9 L12 0.6 L11.6 3Z" fill="#c8f8d4"/></svg>
<svg class="b" style="left:1523.30px;top:349.80px;" width="7" height="4" viewBox="0 0 7 4"><path d="M0 0 H6.8 L3.4 3.2Z" fill="#23272e"/></svg>
<div class="b" style="left:155.00px;top:366.16px;width:1397.00px;height:30.72px;background:#ffffff"></div>
<div class="b" style="left:155.00px;top:395.88px;width:1397.00px;height:1.00px;background:#ececec"></div>
<div class="b" style="left:178.20px;top:374.72px;width:13.60px;height:13.00px;background:#fff;border:1px solid #d2d2d2;border-radius:2px"></div>
<div class="t" style="left:199.75px;top:374.24px;font-size:11.5px;line-height:15px;color:#3b3f46;letter-spacing:0.25px;">07/31/22</div>
<div class="t" style="left:271.75px;top:374.24px;font-size:11.5px;line-height:15px;color:#4a89cc;letter-spacing:0.38px;text-decoration:underline;text-underline-offset:0.5px;text-decoration-color:#a6c8ec">5014861179023000306</div>
<div class="t" style="left:425.50px;top:374.24px;font-size:11.5px;line-height:15px;color:#4a89cc;letter-spacing:0.0px;text-decoration:underline;text-underline-offset:0.5px;text-decoration-color:#a6c8ec">Charlie Porter [Drv]</div>
<div class="t" style="left:571.50px;top:374.24px;font-size:11.5px;line-height:15px;color:#4a89cc;letter-spacing:-0.25px;text-decoration:underline;text-underline-offset:0.5px;text-decoration-color:#a6c8ec">Sai Trucking Inc.</div>
<svg class="b" style="left:753.80px;top:373.62px;" width="16" height="16" viewBox="0 0 16 16"><circle cx="8" cy="8" r="7.4" fill="#4fb873"/><path d="M10.2 5.5 C9.9 4.8 9.1 4.4 8 4.4 C6.7 4.4 5.9 5.1 5.9 6 C5.9 7.1 6.9 7.5 8 7.8 C9.2 8.1 10.2 8.6 10.2 9.8 C10.2 10.8 9.2 11.5 8 11.5 C6.8 11.5 6 11.1 5.7 10.3 M8 3.1 V4.4 M8 11.5 V12.9" fill="none" stroke="#d9fbe3" stroke-width="1.5"/></svg>
<div class="t" style="left:813.60px;top:374.24px;font-size:11.5px;line-height:15px;color:#6aa5dd;letter-spacing:0.1px;">5448</div>
<div class="t" style="left:882.30px;top:374.24px;font-size:11.5px;line-height:15px;color:#3b3f46;letter-spacing:0.1px;">763</div>
<div class="t" style="left:951.00px;top:374.24px;font-size:11.5px;line-height:15px;color:#3b3f46;letter-spacing:0.05px;">189 - Flat Bag</div>
<div class="t" style="left:1052.30px;top:374.24px;font-size:11.5px;line-height:15px;color:#3b3f46;letter-spacing:-0.05px;">Naperville, IL</div>
<div class="t" style="left:1114.50px;top:374.24px;width:100px;text-align:right;font-size:11.5px;line-height:15px;color:#3b3f46;letter-spacing:0.1px;">$12.50</div>
<div class="t" style="left:1195.50px;top:374.24px;width:100px;text-align:right;font-size:11.5px;line-height:15px;color:#3b3f46;letter-spacing:0.1px;">1.00</div>
<div class="t" style="left:1338.30px;top:374.24px;font-size:11.5px;line-height:15px;color:#3b3f46;letter-spacing:-0.2px;">SCLE</div>
<div class="b" style="left:1434.00px;top:373.62px;width:30.20px;height:15.20px;border:1.25px solid #6cc58b;border-radius:8px"></div>
<div class="t" style="left:1429.10px;top:375.77px;width:40px;text-align:center;font-size:8.5px;line-height:11px;color:#5aa878;">YES</div>
<div class="b" style="left:1496.70px;top:371.52px;width:19.40px;height:19.40px;background:#4fbd6f;border-radius:2px"></div>
<svg class="b" style="left:1501.00px;top:375.72px;" width="13" height="11" viewBox="0 0 13 11"><path d="M6 1.2 H2.4 Q1.2 1.2 1.2 2.4 V8.4 Q1.2 9.6 2.4 9.6 H8.4 Q9.6 9.6 9.6 8.4 V6.6" fill="none" stroke="#c8f8d4" stroke-width="1.3" stroke-linecap="round"/><path d="M5 7.2 L10.6 2" fill="none" stroke="#c8f8d4" stroke-width="1.7" stroke-linecap="round"/><path d="M9.6 0.9 L12 0.6 L11.6 3Z" fill="#c8f8d4"/></svg>
<svg class="b" style="left:1523.30px;top:380.52px;" width="7" height="4" viewBox="0 0 7 4"><path d="M0 0 H6.8 L3.4 3.2Z" fill="#23272e"/></svg>
<div class="b" style="left:155.00px;top:396.88px;width:1397.00px;height:30.72px;background:#f9f9f9"></div>
<div class="b" style="left:155.00px;top:426.60px;width:1397.00px;height:1.00px;background:#ececec"></div>
<div class="b" style="left:178.20px;top:405.44px;width:13.60px;height:13.00px;background:#fff;border:1px solid #d2d2d2;border-radius:2px"></div>
<div class="t" style="left:199.75px;top:404.96px;font-size:11.5px;line-height:15px;color:#3b3f46;letter-spacing:0.25px;">07/31/22</div>
<div class="t" style="left:271.75px;top:404.96px;font-size:11.5px;line-height:15px;color:#4a89cc;letter-spacing:0.38px;text-decoration:underline;text-underline-offset:0.5px;text-decoration-color:#a6c8ec">5014861179023000306</div>
<div class="t" style="left:425.50px;top:404.96px;font-size:11.5px;line-height:15px;color:#4a89cc;letter-spacing:0.0px;text-decoration:underline;text-underline-offset:0.5px;text-decoration-color:#a6c8ec">Charlie Porter [Drv]</div>
<div class="t" style="left:571.50px;top:404.96px;font-size:11.5px;line-height:15px;color:#4a89cc;letter-spacing:-0.25px;text-decoration:underline;text-underline-offset:0.5px;text-decoration-color:#a6c8ec">Sai Trucking Inc.</div>
<svg class="b" style="left:753.80px;top:404.34px;" width="16" height="16" viewBox="0 0 16 16"><circle cx="8" cy="8" r="6.9" fill="none" stroke="#9a9a9a" stroke-width="1.15"/><path d="M10.2 5.5 C9.9 4.8 9.1 4.4 8 4.4 C6.7 4.4 5.9 5.1 5.9 6 C5.9 7.1 6.9 7.5 8 7.8 C9.2 8.1 10.2 8.6 10.2 9.8 C10.2 10.8 9.2 11.5 8 11.5 C6.8 11.5 6 11.1 5.7 10.3 M8 3.1 V4.4 M8 11.5 V12.9" fill="none" stroke="#9a9a9a" stroke-width="1.2"/></svg>
<div class="t" style="left:813.60px;top:404.96px;font-size:11.5px;line-height:15px;color:#6aa5dd;letter-spacing:0.1px;">5448</div>
<div class="t" style="left:882.30px;top:404.96px;font-size:11.5px;line-height:15px;color:#3b3f46;letter-spacing:0.1px;">763</div>
<div class="t" style="left:951.00px;top:404.96px;font-size:11.5px;line-height:15px;color:#3b3f46;letter-spacing:0.05px;">189 - Flat Bag</div>
<div class="t" style="left:1052.30px;top:404.96px;font-size:11.5px;line-height:15px;color:#3b3f46;letter-spacing:-0.05px;">Naperville, IL</div>
<div class="t" style="left:1114.50px;top:404.96px;width:100px;text-align:right;font-size:11.5px;line-height:15px;color:#3b3f46;letter-spacing:0.1px;">$12.50</div>
<div class="t" style="left:1195.50px;top:404.96px;width:100px;text-align:right;font-size:11.5px;line-height:15px;color:#3b3f46;letter-spacing:0.1px;">1.00</div>
<div class="t" style="left:1338.30px;top:404.96px;font-size:11.5px;line-height:15px;color:#3b3f46;letter-spacing:-0.2px;">SCLE</div>
<div class="b" style="left:1435.70px;top:404.34px;width:26.70px;height:15.20px;border:1.3px solid #5c6069;border-radius:8px"></div>
<div class="t" style="left:1429.05px;top:406.49px;width:40px;text-align:center;font-size:8.5px;line-height:11px;color:#50545b;">NO</div>
<div class="b" style="left:1496.70px;top:402.24px;width:19.40px;height:19.40px;background:#4fbd6f;border-radius:2px"></div>
<svg class="b" style="left:1501.00px;top:406.44px;" width="13" height="11" viewBox="0 0 13 11"><path d="M6 1.2 H2.4 Q1.2 1.2 1.2 2.4 V8.4 Q1.2 9.6 2.4 9.6 H8.4 Q9.6 9.6 9.6 8.4 V6.6" fill="none" stroke="#c8f8d4" stroke-width="1.3" stroke-linecap="round"/><path d="M5 7.2 L10.6 2" fill="none" stroke="#c8f8d4" stroke-width="1.7" stroke-linecap="round"/><path d="M9.6 0.9 L12 0.6 L11.6 3Z" fill="#c8f8d4"/></svg>
<svg class="b" style="left:1523.30px;top:411.24px;" width="7" height="4" viewBox="0 0 7 4"><path d="M0 0 H6.8 L3.4 3.2Z" fill="#23272e"/></svg>
<div class="b" style="left:155.00px;top:427.60px;width:1397.00px;height:30.72px;background:#ffffff"></div>
<div class="b" style="left:155.00px;top:457.32px;width:1397.00px;height:1.00px;background:#ececec"></div>
<div class="b" style="left:178.20px;top:436.16px;width:13.60px;height:13.00px;background:#fff;border:1px solid #d2d2d2;border-radius:2px"></div>
<div class="t" style="left:199.75px;top:435.68px;font-size:11.5px;line-height:15px;color:#3b3f46;letter-spacing:0.25px;">07/31/22</div>
<div class="t" style="left:271.75px;top:435.68px;font-size:11.5px;line-height:15px;color:#4a89cc;letter-spacing:0.38px;text-decoration:underline;text-underline-offset:0.5px;text-decoration-color:#a6c8ec">5014861179023000306</div>
<div class="t" style="left:425.50px;top:435.68px;font-size:11.5px;line-height:15px;color:#4a89cc;letter-spacing:0.0px;text-decoration:underline;text-underline-offset:0.5px;text-decoration-color:#a6c8ec">Charlie Porter [Drv]</div>
<div class="t" style="left:571.50px;top:435.68px;font-size:11.5px;line-height:15px;color:#4a89cc;letter-spacing:-0.25px;text-decoration:underline;text-underline-offset:0.5px;text-decoration-color:#a6c8ec">Sai Trucking Inc.</div>
<svg class="b" style="left:753.80px;top:435.06px;" width="16" height="16" viewBox="0 0 16 16"><circle cx="8" cy="8" r="6.9" fill="none" stroke="#9a9a9a" stroke-width="1.15"/><path d="M10.2 5.5 C9.9 4.8 9.1 4.4 8 4.4 C6.7 4.4 5.9 5.1 5.9 6 C5.9 7.1 6.9 7.5 8 7.8 C9.2 8.1 10.2 8.6 10.2 9.8 C10.2 10.8 9.2 11.5 8 11.5 C6.8 11.5 6 11.1 5.7 10.3 M8 3.1 V4.4 M8 11.5 V12.9" fill="none" stroke="#9a9a9a" stroke-width="1.2"/></svg>
<div class="t" style="left:813.60px;top:435.68px;font-size:11.5px;line-height:15px;color:#6aa5dd;letter-spacing:0.1px;">5448</div>
<div class="t" style="left:882.30px;top:435.68px;font-size:11.5px;line-height:15px;color:#3b3f46;letter-spacing:0.1px;">763</div>
<div class="t" style="left:951.00px;top:435.68px;font-size:11.5px;line-height:15px;color:#3b3f46;letter-spacing:0.05px;">189 - Flat Bag</div>
<div class="t" style="left:1052.30px;top:435.68px;font-size:11.5px;line-height:15px;color:#3b3f46;letter-spacing:-0.05px;">Naperville, IL</div>
<div class="t" style="left:1114.50px;top:435.68px;width:100px;text-align:right;font-size:11.5px;line-height:15px;color:#3b3f46;letter-spacing:0.1px;">$12.50</div>
<div class="t" style="left:1195.50px;top:435.68px;width:100px;text-align:right;font-size:11.5px;line-height:15px;color:#3b3f46;letter-spacing:0.1px;">1.00</div>
<div class="t" style="left:1338.30px;top:435.68px;font-size:11.5px;line-height:15px;color:#3b3f46;letter-spacing:-0.2px;">SCLE</div>
<div class="b" style="left:1434.00px;top:435.06px;width:30.20px;height:15.20px;border:1.25px solid #6cc58b;border-radius:8px"></div>
<div class="t" style="left:1429.10px;top:437.21px;width:40px;text-align:center;font-size:8.5px;line-height:11px;color:#5aa878;">YES</div>
<div class="b" style="left:1496.70px;top:432.96px;width:19.40px;height:19.40px;background:#4fbd6f;border-radius:2px"></div>
<svg class="b" style="left:1501.00px;top:437.16px;" width="13" height="11" viewBox="0 0 13 11"><path d="M6 1.2 H2.4 Q1.2 1.2 1.2 2.4 V8.4 Q1.2 9.6 2.4 9.6 H8.4 Q9.6 9.6 9.6 8.4 V6.6" fill="none" stroke="#c8f8d4" stroke-width="1.3" stroke-linecap="round"/><path d="M5 7.2 L10.6 2" fill="none" stroke="#c8f8d4" stroke-width="1.7" stroke-linecap="round"/><path d="M9.6 0.9 L12 0.6 L11.6 3Z" fill="#c8f8d4"/></svg>
<svg class="b" style="left:1523.30px;top:441.96px;" width="7" height="4" viewBox="0 0 7 4"><path d="M0 0 H6.8 L3.4 3.2Z" fill="#23272e"/></svg>
<div class="b" style="left:155.00px;top:458.32px;width:1397.00px;height:30.72px;background:#f9f9f9"></div>
<div class="b" style="left:155.00px;top:488.04px;width:1397.00px;height:1.00px;background:#ececec"></div>
<div class="b" style="left:178.20px;top:466.88px;width:13.60px;height:13.00px;background:#fff;border:1px solid #d2d2d2;border-radius:2px"></div>
<div class="t" style="left:199.75px;top:466.40px;font-size:11.5px;line-height:15px;color:#3b3f46;letter-spacing:0.25px;">07/31/22</div>
<div class="t" style="left:271.75px;top:466.40px;font-size:11.5px;line-height:15px;color:#4a89cc;letter-spacing:0.38px;text-decoration:underline;text-underline-offset:0.5px;text-decoration-color:#a6c8ec">5014861179023000306</div>
<div class="t" style="left:425.50px;top:466.40px;font-size:11.5px;line-height:15px;color:#4a89cc;letter-spacing:0.0px;text-decoration:underline;text-underline-offset:0.5px;text-decoration-color:#a6c8ec">Charlie Porter [Drv]</div>
<div class="t" style="left:571.50px;top:466.40px;font-size:11.5px;line-height:15px;color:#4a89cc;letter-spacing:-0.25px;text-decoration:underline;text-underline-offset:0.5px;text-decoration-color:#a6c8ec">Sai Trucking Inc.</div>
<svg class="b" style="left:753.80px;top:465.78px;" width="16" height="16" viewBox="0 0 16 16"><circle cx="8" cy="8" r="7.4" fill="#4fb873"/><path d="M10.2 5.5 C9.9 4.8 9.1 4.4 8 4.4 C6.7 4.4 5.9 5.1 5.9 6 C5.9 7.1 6.9 7.5 8 7.8 C9.2 8.1 10.2 8.6 10.2 9.8 C10.2 10.8 9.2 11.5 8 11.5 C6.8 11.5 6 11.1 5.7 10.3 M8 3.1 V4.4 M8 11.5 V12.9" fill="none" stroke="#d9fbe3" stroke-width="1.5"/></svg>
<div class="t" style="left:813.60px;top:466.40px;font-size:11.5px;line-height:15px;color:#6aa5dd;letter-spacing:0.1px;">5448</div>
<div class="t" style="left:882.30px;top:466.40px;font-size:11.5px;line-height:15px;color:#3b3f46;letter-spacing:0.1px;">763</div>
<div class="t" style="left:951.00px;top:466.40px;font-size:11.5px;line-height:15px;color:#3b3f46;letter-spacing:0.05px;">189 - Flat Bag</div>
<div class="t" style="left:1052.30px;top:466.40px;font-size:11.5px;line-height:15px;color:#3b3f46;letter-spacing:-0.05px;">Naperville, IL</div>
<div class="t" style="left:1114.50px;top:466.40px;width:100px;text-align:right;font-size:11.5px;line-height:15px;color:#3b3f46;letter-spacing:0.1px;">$12.50</div>
<div class="t" style="left:1195.50px;top:466.40px;width:100px;text-align:right;font-size:11.5px;line-height:15px;color:#3b3f46;letter-spacing:0.1px;">1.00</div>
<div class="t" style="left:1338.30px;top:466.40px;font-size:11.5px;line-height:15px;color:#3b3f46;letter-spacing:-0.2px;">SCLE</div>
<div class="b" style="left:1435.70px;top:465.78px;width:26.70px;height:15.20px;border:1.3px solid #5c6069;border-radius:8px"></div>
<div class="t" style="left:1429.05px;top:467.93px;width:40px;text-align:center;font-size:8.5px;line-height:11px;color:#50545b;">NO</div>
<div class="b" style="left:1496.70px;top:463.68px;width:19.40px;height:19.40px;background:#4fbd6f;border-radius:2px"></div>
<svg class="b" style="left:1501.00px;top:467.88px;" width="13" height="11" viewBox="0 0 13 11"><path d="M6 1.2 H2.4 Q1.2 1.2 1.2 2.4 V8.4 Q1.2 9.6 2.4 9.6 H8.4 Q9.6 9.6 9.6 8.4 V6.6" fill="none" stroke="#c8f8d4" stroke-width="1.3" stroke-linecap="round"/><path d="M5 7.2 L10.6 2" fill="none" stroke="#c8f8d4" stroke-width="1.7" stroke-linecap="round"/><path d="M9.6 0.9 L12 0.6 L11.6 3Z" fill="#c8f8d4"/></svg>
<svg class="b" style="left:1523.30px;top:472.68px;" width="7" height="4" viewBox="0 0 7 4"><path d="M0 0 H6.8 L3.4 3.2Z" fill="#23272e"/></svg>
<div class="b" style="left:155.00px;top:489.04px;width:1397.00px;height:30.72px;background:#ffffff"></div>
<div class="b" style="left:155.00px;top:518.76px;width:1397.00px;height:1.00px;background:#ececec"></div>
<div class="b" style="left:178.20px;top:497.60px;width:13.60px;height:13.00px;background:#fff;border:1px solid #d2d2d2;border-radius:2px"></div>
<div class="t" style="left:199.75px;top:497.12px;font-size:11.5px;line-height:15px;color:#3b3f46;letter-spacing:0.25px;">07/31/22</div>
<div class="t" style="left:271.75px;top:497.12px;font-size:11.5px;line-height:15px;color:#4a89cc;letter-spacing:0.38px;text-decoration:underline;text-underline-offset:0.5px;text-decoration-color:#a6c8ec">5014861179023000306</div>
<div class="t" style="left:425.50px;top:497.12px;font-size:11.5px;line-height:15px;color:#4a89cc;letter-spacing:0.0px;text-decoration:underline;text-underline-offset:0.5px;text-decoration-color:#a6c8ec">Charlie Porter [Drv]</div>
<div class="t" style="left:571.50px;top:497.12px;font-size:11.5px;line-height:15px;color:#4a89cc;letter-spacing:-0.25px;text-decoration:underline;text-underline-offset:0.5px;text-decoration-color:#a6c8ec">Sai Trucking Inc.</div>
<svg class="b" style="left:753.80px;top:496.50px;" width="16" height="16" viewBox="0 0 16 16"><circle cx="8" cy="8" r="7.4" fill="#4fb873"/><path d="M10.2 5.5 C9.9 4.8 9.1 4.4 8 4.4 C6.7 4.4 5.9 5.1 5.9 6 C5.9 7.1 6.9 7.5 8 7.8 C9.2 8.1 10.2 8.6 10.2 9.8 C10.2 10.8 9.2 11.5 8 11.5 C6.8 11.5 6 11.1 5.7 10.3 M8 3.1 V4.4 M8 11.5 V12.9" fill="none" stroke="#d9fbe3" stroke-width="1.5"/></svg>
<div class="t" style="left:813.60px;top:497.12px;font-size:11.5px;line-height:15px;color:#6aa5dd;letter-spacing:0.1px;">5448</div>
<div class="t" style="left:882.30px;top:497.12px;font-size:11.5px;line-height:15px;color:#3b3f46;letter-spacing:0.1px;">763</div>
<div class="t" style="left:951.00px;top:497.12px;font-size:11.5px;line-height:15px;color:#3b3f46;letter-spacing:0.05px;">189 - Flat Bag</div>
<div class="t" style="left:1052.30px;top:497.12px;font-size:11.5px;line-height:15px;color:#3b3f46;letter-spacing:-0.05px;">Naperville, IL</div>
<div class="t" style="left:1114.50px;top:497.12px;width:100px;text-align:right;font-size:11.5px;line-height:15px;color:#3b3f46;letter-spacing:0.1px;">$12.50</div>
<div class="t" style="left:1195.50px;top:497.12px;width:100px;text-align:right;font-size:11.5px;line-height:15px;color:#3b3f46;letter-spacing:0.1px;">1.00</div>
<div class="t" style="left:1338.30px;top:497.12px;font-size:11.5px;line-height:15px;color:#3b3f46;letter-spacing:-0.2px;">SCLE</div>
<div class="b" style="left:1435.70px;top:496.50px;width:26.70px;height:15.20px;border:1.3px solid #5c6069;border-radius:8px"></div>
<div class="t" style="left:1429.05px;top:498.65px;width:40px;text-align:center;font-size:8.5px;line-height:11px;color:#50545b;">NO</div>
<div class="b" style="left:1496.70px;top:494.40px;width:19.40px;height:19.40px;background:#4fbd6f;border-radius:2px"></div>
<svg class="b" style="left:1501.00px;top:498.60px;" width="13" height="11" viewBox="0 0 13 11"><path d="M6 1.2 H2.4 Q1.2 1.2 1.2 2.4 V8.4 Q1.2 9.6 2.4 9.6 H8.4 Q9.6 9.6 9.6 8.4 V6.6" fill="none" stroke="#c8f8d4" stroke-width="1.3" stroke-linecap="round"/><path d="M5 7.2 L10.6 2" fill="none" stroke="#c8f8d4" stroke-width="1.7" stroke-linecap="round"/><path d="M9.6 0.9 L12 0.6 L11.6 3Z" fill="#c8f8d4"/></svg>
<svg class="b" style="left:1523.30px;top:503.40px;" width="7" height="4" viewBox="0 0 7 4"><path d="M0 0 H6.8 L3.4 3.2Z" fill="#23272e"/></svg>
<div class="b" style="left:155.00px;top:519.76px;width:1397.00px;height:30.72px;background:#f9f9f9"></div>
<div class="b" style="left:155.00px;top:549.48px;width:1397.00px;height:1.00px;background:#ececec"></div>
<div class="b" style="left:178.20px;top:528.32px;width:13.60px;height:13.00px;background:#fff;border:1px solid #d2d2d2;border-radius:2px"></div>
<div class="t" style="left:199.75px;top:527.84px;font-size:11.5px;line-height:15px;color:#3b3f46;letter-spacing:0.25px;">07/31/22</div>
<div class="t" style="left:271.75px;top:527.84px;font-size:11.5px;line-height:15px;color:#4a89cc;letter-spacing:0.38px;text-decoration:underline;text-underline-offset:0.5px;text-decoration-color:#a6c8ec">5014861179023000306</div>
<div class="t" style="left:425.50px;top:527.84px;font-size:11.5px;line-height:15px;color:#4a89cc;letter-spacing:0.0px;text-decoration:underline;text-underline-offset:0.5px;text-decoration-color:#a6c8ec">Charlie Porter [Drv]</div>
<div class="t" style="left:571.50px;top:527.84px;font-size:11.5px;line-height:15px;color:#4a89cc;letter-spacing:-0.25px;text-decoration:underline;text-underline-offset:0.5px;text-decoration-color:#a6c8ec">Sai Trucking Inc.</div>
<svg class="b" style="left:753.80px;top:527.22px;" width="16" height="16" viewBox="0 0 16 16"><circle cx="8" cy="8" r="6.9" fill="none" stroke="#9a9a9a" stroke-width="1.15"/><path d="M10.2 5.5 C9.9 4.8 9.1 4.4 8 4.4 C6.7 4.4 5.9 5.1 5.9 6 C5.9 7.1 6.9 7.5 8 7.8 C9.2 8.1 10.2 8.6 10.2 9.8 C10.2 10.8 9.2 11.5 8 11.5 C6.8 11.5 6 11.1 5.7 10.3 M8 3.1 V4.4 M8 11.5 V12.9" fill="none" stroke="#9a9a9a" stroke-width="1.2"/></svg>
<div class="t" style="left:813.60px;top:527.84px;font-size:11.5px;line-height:15px;color:#6aa5dd;letter-spacing:0.1px;">5448</div>
<div class="t" style="left:882.30px;top:527.84px;font-size:11.5px;line-height:15px;color:#3b3f46;letter-spacing:0.1px;">763</div>
<div class="t" style="left:951.00px;top:527.84px;font-size:11.5px;line-height:15px;color:#3b3f46;letter-spacing:0.05px;">189 - Flat Bag</div>
<div class="t" style="left:1052.30px;top:527.84px;font-size:11.5px;line-height:15px;color:#3b3f46;letter-spacing:-0.05px;">Naperville, IL</div>
<div class="t" style="left:1114.50px;top:527.84px;width:100px;text-align:right;font-size:11.5px;line-height:15px;color:#3b3f46;letter-spacing:0.1px;">$12.50</div>
<div class="t" style="left:1195.50px;top:527.84px;width:100px;text-align:right;font-size:11.5px;line-height:15px;color:#3b3f46;letter-spacing:0.1px;">1.00</div>
<div class="t" style="left:1338.30px;top:527.84px;font-size:11.5px;line-height:15px;color:#3b3f46;letter-spacing:-0.2px;">SCLE</div>
<div class="b" style="left:1434.00px;top:527.22px;width:30.20px;height:15.20px;border:1.25px solid #6cc58b;border-radius:8px"></div>
<div class="t" style="left:1429.10px;top:529.37px;width:40px;text-align:center;font-size:8.5px;line-height:11px;color:#5aa878;">YES</div>
<div class="b" style="left:1496.70px;top:525.12px;width:19.40px;height:19.40px;background:#4fbd6f;border-radius:2px"></div>
<svg class="b" style="left:1501.00px;top:529.32px;" width="13" height="11" viewBox="0 0 13 11"><path d="M6 1.2 H2.4 Q1.2 1.2 1.2 2.4 V8.4 Q1.2 9.6 2.4 9.6 H8.4 Q9.6 9.6 9.6 8.4 V6.6" fill="none" stroke="#c8f8d4" stroke-width="1.3" stroke-linecap="round"/><path d="M5 7.2 L10.6 2" fill="none" stroke="#c8f8d4" stroke-width="1.7" stroke-linecap="round"/><path d="M9.6 0.9 L12 0.6 L11.6 3Z" fill="#c8f8d4"/></svg>
<svg class="b" style="left:1523.30px;top:534.12px;" width="7" height="4" viewBox="0 0 7 4"><path d="M0 0 H6.8 L3.4 3.2Z" fill="#23272e"/></svg>
<div class="b" style="left:155.00px;top:550.48px;width:1397.00px;height:30.72px;background:#ffffff"></div>
<div class="b" style="left:155.00px;top:580.20px;width:1397.00px;height:1.00px;background:#ececec"></div>
<div class="b" style="left:178.20px;top:559.04px;width:13.60px;height:13.00px;background:#fff;border:1px solid #d2d2d2;border-radius:2px"></div>
<div class="t" style="left:199.75px;top:558.56px;font-size:11.5px;line-height:15px;color:#3b3f46;letter-spacing:0.25px;">07/31/22</div>
<div class="t" style="left:271.75px;top:558.56px;font-size:11.5px;line-height:15px;color:#4a89cc;letter-spacing:0.38px;text-decoration:underline;text-underline-offset:0.5px;text-decoration-color:#a6c8ec">5014861179023000306</div>
<div class="t" style="left:425.50px;top:558.56px;font-size:11.5px;line-height:15px;color:#4a89cc;letter-spacing:0.0px;text-decoration:underline;text-underline-offset:0.5px;text-decoration-color:#a6c8ec">Charlie Porter [Drv]</div>
<div class="t" style="left:571.50px;top:558.56px;font-size:11.5px;line-height:15px;color:#4a89cc;letter-spacing:-0.25px;text-decoration:underline;text-underline-offset:0.5px;text-decoration-color:#a6c8ec">Sai Trucking Inc.</div>
<svg class="b" style="left:753.80px;top:557.94px;" width="16" height="16" viewBox="0 0 16 16"><circle cx="8" cy="8" r="6.9" fill="none" stroke="#9a9a9a" stroke-width="1.15"/><path d="M10.2 5.5 C9.9 4.8 9.1 4.4 8 4.4 C6.7 4.4 5.9 5.1 5.9 6 C5.9 7.1 6.9 7.5 8 7.8 C9.2 8.1 10.2 8.6 10.2 9.8 C10.2 10.8 9.2 11.5 8 11.5 C6.8 11.5 6 11.1 5.7 10.3 M8 3.1 V4.4 M8 11.5 V12.9" fill="none" stroke="#9a9a9a" stroke-width="1.2"/></svg>
<div class="t" style="left:813.60px;top:558.56px;font-size:11.5px;line-height:15px;color:#6aa5dd;letter-spacing:0.1px;">5448</div>
<div class="t" style="left:882.30px;top:558.56px;font-size:11.5px;line-height:15px;color:#3b3f46;letter-spacing:0.1px;">763</div>
<div class="t" style="left:951.00px;top:558.56px;font-size:11.5px;line-height:15px;color:#3b3f46;letter-spacing:0.05px;">189 - Flat Bag</div>
<div class="t" style="left:1052.30px;top:558.56px;font-size:11.5px;line-height:15px;color:#3b3f46;letter-spacing:-0.05px;">Naperville, IL</div>
<div class="t" style="left:1114.50px;top:558.56px;width:100px;text-align:right;font-size:11.5px;line-height:15px;color:#3b3f46;letter-spacing:0.1px;">$12.50</div>
<div class="t" style="left:1195.50px;top:558.56px;width:100px;text-align:right;font-size:11.5px;line-height:15px;color:#3b3f46;letter-spacing:0.1px;">1.00</div>
<div class="t" style="left:1338.30px;top:558.56px;font-size:11.5px;line-height:15px;color:#3b3f46;letter-spacing:-0.2px;">SCLE</div>
<div class="b" style="left:1434.00px;top:557.94px;width:30.20px;height:15.20px;border:1.25px solid #6cc58b;border-radius:8px"></div>
<div class="t" style="left:1429.10px;top:560.09px;width:40px;text-align:center;font-size:8.5px;line-height:11px;color:#5aa878;">YES</div>
<div class="b" style="left:1496.70px;top:555.84px;width:19.40px;height:19.40px;background:#4fbd6f;border-radius:2px"></div>
<svg class="b" style="left:1501.00px;top:560.04px;" width="13" height="11" viewBox="0 0 13 11"><path d="M6 1.2 H2.4 Q1.2 1.2 1.2 2.4 V8.4 Q1.2 9.6 2.4 9.6 H8.4 Q9.6 9.6 9.6 8.4 V6.6" fill="none" stroke="#c8f8d4" stroke-width="1.3" stroke-linecap="round"/><path d="M5 7.2 L10.6 2" fill="none" stroke="#c8f8d4" stroke-width="1.7" stroke-linecap="round"/><path d="M9.6 0.9 L12 0.6 L11.6 3Z" fill="#c8f8d4"/></svg>
<svg class="b" style="left:1523.30px;top:564.84px;" width="7" height="4" viewBox="0 0 7 4"><path d="M0 0 H6.8 L3.4 3.2Z" fill="#23272e"/></svg>
<div class="b" style="left:155.00px;top:581.20px;width:1397.00px;height:30.72px;background:#f9f9f9"></div>
<div class="b" style="left:155.00px;top:610.92px;width:1397.00px;height:1.00px;background:#ececec"></div>
<div class="b" style="left:178.20px;top:589.76px;width:13.60px;height:13.00px;background:#fff;border:1px solid #d2d2d2;border-radius:2px"></div>
<div class="t" style="left:199.75px;top:589.28px;font-size:11.5px;line-height:15px;color:#3b3f46;letter-spacing:0.25px;">07/31/22</div>
<div class="t" style="left:271.75px;top:589.28px;font-size:11.5px;line-height:15px;color:#4a89cc;letter-spacing:0.38px;text-decoration:underline;text-underline-offset:0.5px;text-decoration-color:#a6c8ec">5014861179023000306</div>
<div class="t" style="left:425.50px;top:589.28px;font-size:11.5px;line-height:15px;color:#4a89cc;letter-spacing:0.0px;text-decoration:underline;text-underline-offset:0.5px;text-decoration-color:#a6c8ec">Charlie Porter [Drv]</div>
<div class="t" style="left:571.50px;top:589.28px;font-size:11.5px;line-height:15px;color:#4a89cc;letter-spacing:-0.25px;text-decoration:underline;text-underline-offset:0.5px;text-decoration-color:#a6c8ec">Sai Trucking Inc.</div>
<svg class="b" style="left:753.80px;top:588.66px;" width="16" height="16" viewBox="0 0 16 16"><circle cx="8" cy="8" r="7.4" fill="#4fb873"/><path d="M10.2 5.5 C9.9 4.8 9.1 4.4 8 4.4 C6.7 4.4 5.9 5.1 5.9 6 C5.9 7.1 6.9 7.5 8 7.8 C9.2 8.1 10.2 8.6 10.2 9.8 C10.2 10.8 9.2 11.5 8 11.5 C6.8 11.5 6 11.1 5.7 10.3 M8 3.1 V4.4 M8 11.5 V12.9" fill="none" stroke="#d9fbe3" stroke-width="1.5"/></svg>
<div class="t" style="left:813.60px;top:589.28px;font-size:11.5px;line-height:15px;color:#6aa5dd;letter-spacing:0.1px;">5448</div>
<div class="t" style="left:882.30px;top:589.28px;font-size:11.5px;line-height:15px;color:#3b3f46;letter-spacing:0.1px;">763</div>
<div class="t" style="left:951.00px;top:589.28px;font-size:11.5px;line-height:15px;color:#3b3f46;letter-spacing:0.05px;">189 - Flat Bag</div>
<div class="t" style="left:1052.30px;top:589.28px;font-size:11.5px;line-height:15px;color:#3b3f46;letter-spacing:-0.05px;">Naperville, IL</div>
<div class="t" style="left:1114.50px;top:589.28px;width:100px;text-align:right;font-size:11.5px;line-height:15px;color:#3b3f46;letter-spacing:0.1px;">$12.50</div>
<div class="t" style="left:1195.50px;top:589.28px;width:100px;text-align:right;font-size:11.5px;line-height:15px;color:#3b3f46;letter-spacing:0.1px;">1.00</div>
<div class="t" style="left:1338.30px;top:589.28px;font-size:11.5px;line-height:15px;color:#3b3f46;letter-spacing:-0.2px;">SCLE</div>
<div class="b" style="left:1434.00px;top:588.66px;width:30.20px;height:15.20px;border:1.25px solid #6cc58b;border-radius:8px"></div>
<div class="t" style="left:1429.10px;top:590.81px;width:40px;text-align:center;font-size:8.5px;line-height:11px;color:#5aa878;">YES</div>
<div class="b" style="left:1496.70px;top:586.56px;width:19.40px;height:19.40px;background:#4fbd6f;border-radius:2px"></div>
<svg class="b" style="left:1501.00px;top:590.76px;" width="13" height="11" viewBox="0 0 13 11"><path d="M6 1.2 H2.4 Q1.2 1.2 1.2 2.4 V8.4 Q1.2 9.6 2.4 9.6 H8.4 Q9.6 9.6 9.6 8.4 V6.6" fill="none" stroke="#c8f8d4" stroke-width="1.3" stroke-linecap="round"/><path d="M5 7.2 L10.6 2" fill="none" stroke="#c8f8d4" stroke-width="1.7" stroke-linecap="round"/><path d="M9.6 0.9 L12 0.6 L11.6 3Z" fill="#c8f8d4"/></svg>
<svg class="b" style="left:1523.30px;top:595.56px;" width="7" height="4" viewBox="0 0 7 4"><path d="M0 0 H6.8 L3.4 3.2Z" fill="#23272e"/></svg>
<div class="b" style="left:155.00px;top:611.92px;width:1397.00px;height:30.72px;background:#ffffff"></div>
<div class="b" style="left:155.00px;top:641.64px;width:1397.00px;height:1.00px;background:#ececec"></div>
<div class="b" style="left:178.20px;top:620.48px;width:13.60px;height:13.00px;background:#fff;border:1px solid #d2d2d2;border-radius:2px"></div>
<div class="t" style="left:199.75px;top:620.00px;font-size:11.5px;line-height:15px;color:#3b3f46;letter-spacing:0.25px;">07/31/22</div>
<div class="t" style="left:271.75px;top:620.00px;font-size:11.5px;line-height:15px;color:#4a89cc;letter-spacing:0.38px;text-decoration:underline;text-underline-offset:0.5px;text-decoration-color:#a6c8ec">5014861179023000306</div>
<div class="t" style="left:425.50px;top:620.00px;font-size:11.5px;line-height:15px;color:#4a89cc;letter-spacing:0.0px;text-decoration:underline;text-underline-offset:0.5px;text-decoration-color:#a6c8ec">Charlie Porter [Drv]</div>
<div class="t" style="left:571.50px;top:620.00px;font-size:11.5px;line-height:15px;color:#4a89cc;letter-spacing:-0.25px;text-decoration:underline;text-underline-offset:0.5px;text-decoration-color:#a6c8ec">Sai Trucking Inc.</div>
<svg class="b" style="left:753.80px;top:619.38px;" width="16" height="16" viewBox="0 0 16 16"><circle cx="8" cy="8" r="7.4" fill="#4fb873"/><path d="M10.2 5.5 C9.9 4.8 9.1 4.4 8 4.4 C6.7 4.4 5.9 5.1 5.9 6 C5.9 7.1 6.9 7.5 8 7.8 C9.2 8.1 10.2 8.6 10.2 9.8 C10.2 10.8 9.2 11.5 8 11.5 C6.8 11.5 6 11.1 5.7 10.3 M8 3.1 V4.4 M8 11.5 V12.9" fill="none" stroke="#d9fbe3" stroke-width="1.5"/></svg>
<div class="t" style="left:813.60px;top:620.00px;font-size:11.5px;line-height:15px;color:#6aa5dd;letter-spacing:0.1px;">5448</div>
<div class="t" style="left:882.30px;top:620.00px;font-size:11.5px;line-height:15px;color:#3b3f46;letter-spacing:0.1px;">763</div>
<div class="t" style="left:951.00px;top:620.00px;font-size:11.5px;line-height:15px;color:#3b3f46;letter-spacing:0.05px;">189 - Flat Bag</div>
<div class="t" style="left:1052.30px;top:620.00px;font-size:11.5px;line-height:15px;color:#3b3f46;letter-spacing:-0.05px;">Naperville, IL</div>
<div class="t" style="left:1114.50px;top:620.00px;width:100px;text-align:right;font-size:11.5px;line-height:15px;color:#3b3f46;letter-spacing:0.1px;">$12.50</div>
<div class="t" style="left:1195.50px;top:620.00px;width:100px;text-align:right;font-size:11.5px;line-height:15px;color:#3b3f46;letter-spacing:0.1px;">1.00</div>
<div class="t" style="left:1338.30px;top:620.00px;font-size:11.5px;line-height:15px;color:#3b3f46;letter-spacing:-0.2px;">SCLE</div>
<div class="b" style="left:1434.00px;top:619.38px;width:30.20px;height:15.20px;border:1.25px solid #6cc58b;border-radius:8px"></div>
<div class="t" style="left:1429.10px;top:621.53px;width:40px;text-align:center;font-size:8.5px;line-height:11px;color:#5aa878;">YES</div>
<div class="b" style="left:1496.70px;top:617.28px;width:19.40px;height:19.40px;background:#4fbd6f;border-radius:2px"></div>
<svg class="b" style="left:1501.00px;top:621.48px;" width="13" height="11" viewBox="0 0 13 11"><path d="M6 1.2 H2.4 Q1.2 1.2 1.2 2.4 V8.4 Q1.2 9.6 2.4 9.6 H8.4 Q9.6 9.6 9.6 8.4 V6.6" fill="none" stroke="#c8f8d4" stroke-width="1.3" stroke-linecap="round"/><path d="M5 7.2 L10.6 2" fill="none" stroke="#c8f8d4" stroke-width="1.7" stroke-linecap="round"/><path d="M9.6 0.9 L12 0.6 L11.6 3Z" fill="#c8f8d4"/></svg>
<svg class="b" style="left:1523.30px;top:626.28px;" width="7" height="4" viewBox="0 0 7 4"><path d="M0 0 H6.8 L3.4 3.2Z" fill="#23272e"/></svg>
<div class="b" style="left:155.00px;top:642.64px;width:1397.00px;height:30.72px;background:#f9f9f9"></div>
<div class="b" style="left:155.00px;top:672.36px;width:1397.00px;height:1.00px;background:#ececec"></div>
<div class="b" style="left:178.20px;top:651.20px;width:13.60px;height:13.00px;background:#fff;border:1px solid #d2d2d2;border-radius:2px"></div>
<div class="t" style="left:199.75px;top:650.72px;font-size:11.5px;line-height:15px;color:#3b3f46;letter-spacing:0.25px;">07/31/22</div>
<div class="t" style="left:271.75px;top:650.72px;font-size:11.5px;line-height:15px;color:#4a89cc;letter-spacing:0.38px;text-decoration:underline;text-underline-offset:0.5px;text-decoration-color:#a6c8ec">5014861179023000306</div>
<div class="t" style="left:425.50px;top:650.72px;font-size:11.5px;line-height:15px;color:#4a89cc;letter-spacing:0.0px;text-decoration:underline;text-underline-offset:0.5px;text-decoration-color:#a6c8ec">Charlie Porter [Drv]</div>
<div class="t" style="left:571.50px;top:650.72px;font-size:11.5px;line-height:15px;color:#4a89cc;letter-spacing:-0.25px;text-decoration:underline;text-underline-offset:0.5px;text-decoration-color:#a6c8ec">Sai Trucking Inc.</div>
<svg class="b" style="left:753.80px;top:650.10px;" width="16" height="16" viewBox="0 0 16 16"><circle cx="8" cy="8" r="6.9" fill="none" stroke="#9a9a9a" stroke-width="1.15"/><path d="M10.2 5.5 C9.9 4.8 9.1 4.4 8 4.4 C6.7 4.4 5.9 5.1 5.9 6 C5.9 7.1 6.9 7.5 8 7.8 C9.2 8.1 10.2 8.6 10.2 9.8 C10.2 10.8 9.2 11.5 8 11.5 C6.8 11.5 6 11.1 5.7 10.3 M8 3.1 V4.4 M8 11.5 V12.9" fill="none" stroke="#9a9a9a" stroke-width="1.2"/></svg>
<div class="t" style="left:813.60px;top:650.72px;font-size:11.5px;line-height:15px;color:#6aa5dd;letter-spacing:0.1px;">5448</div>
<div class="t" style="left:882.30px;top:650.72px;font-size:11.5px;line-height:15px;color:#3b3f46;letter-spacing:0.1px;">763</div>
<div class="t" style="left:951.00px;top:650.72px;font-size:11.5px;line-height:15px;color:#3b3f46;letter-spacing:0.05px;">189 - Flat Bag</div>
<div class="t" style="left:1052.30px;top:650.72px;font-size:11.5px;line-height:15px;color:#3b3f46;letter-spacing:-0.05px;">Naperville, IL</div>
<div class="t" style="left:1114.50px;top:650.72px;width:100px;text-align:right;font-size:11.5px;line-height:15px;color:#3b3f46;letter-spacing:0.1px;">$12.50</div>
<div class="t" style="left:1195.50px;top:650.72px;width:100px;text-align:right;font-size:11.5px;line-height:15px;color:#3b3f46;letter-spacing:0.1px;">1.00</div>
<div class="t" style="left:1338.30px;top:650.72px;font-size:11.5px;line-height:15px;color:#3b3f46;letter-spacing:-0.2px;">SCLE</div>
<div class="b" style="left:1434.00px;top:650.10px;width:30.20px;height:15.20px;border:1.25px solid #6cc58b;border-radius:8px"></div>
<div class="t" style="left:1429.10px;top:652.25px;width:40px;text-align:center;font-size:8.5px;line-height:11px;color:#5aa878;">YES</div>
<div class="b" style="left:1496.70px;top:648.00px;width:19.40px;height:19.40px;background:#4fbd6f;border-radius:2px"></div>
<svg class="b" style="left:1501.00px;top:652.20px;" width="13" height="11" viewBox="0 0 13 11"><path d="M6 1.2 H2.4 Q1.2 1.2 1.2 2.4 V8.4 Q1.2 9.6 2.4 9.6 H8.4 Q9.6 9.6 9.6 8.4 V6.6" fill="none" stroke="#c8f8d4" stroke-width="1.3" stroke-linecap="round"/><path d="M5 7.2 L10.6 2" fill="none" stroke="#c8f8d4" stroke-width="1.7" stroke-linecap="round"/><path d="M9.6 0.9 L12 0.6 L11.6 3Z" fill="#c8f8d4"/></svg>
<svg class="b" style="left:1523.30px;top:657.00px;" width="7" height="4" viewBox="0 0 7 4"><path d="M0 0 H6.8 L3.4 3.2Z" fill="#23272e"/></svg>
</div>
</body></html>
